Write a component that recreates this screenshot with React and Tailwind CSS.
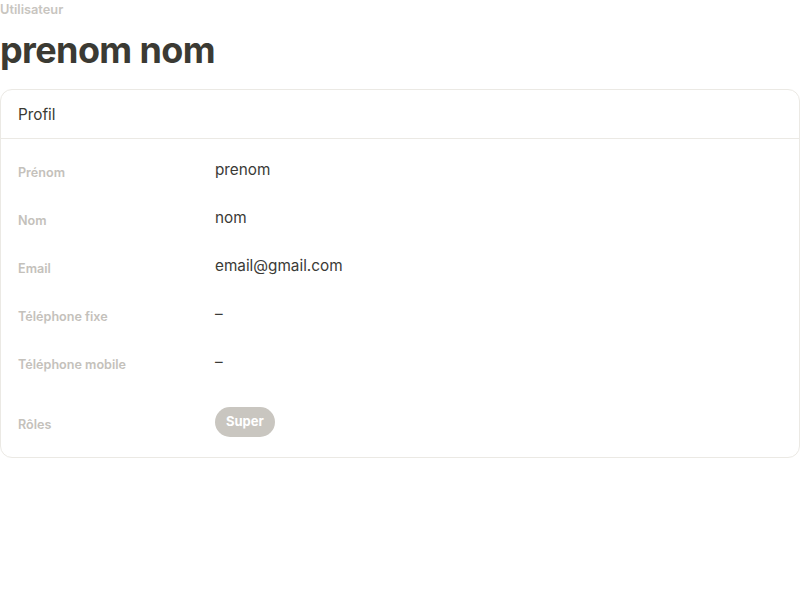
import React from 'react';

const rows = [
  { label: 'Prénom', value: 'prenom' },
  { label: 'Nom', value: 'nom' },
  { label: 'Email', value: 'email@gmail.com' },
  { label: 'Téléphone fixe', value: '–' },
  { label: 'Téléphone mobile', value: '–' },
];

const App = () => {
  return (
    <div className="min-h-screen bg-white" style={{ fontFamily: 'Inter, "Noto Sans", sans-serif' }}>
      <div className="pt-[2px] text-[12.8px] font-semibold leading-4 text-[#c8c5bf]">Utilisateur</div>
      <h1 className="mt-[12px] text-[36px] leading-[40px] font-bold tracking-[-0.017em] text-[#3b3a33]">prenom nom</h1>

      {/* Profile card */}
      <div className="mt-[19px] rounded-xl border border-[#ebe9e4] bg-white">
        <div className="h-[49px] flex items-center pt-[2px] px-[17px] border-b border-[#ebe9e4] text-[15.3px] text-[#3b3a33]">
          Profil
        </div>
        <div className="pt-[19px] pb-[20px] px-[17px]">
          {rows.map((row) => (
            <div key={row.label} className="flex h-[48px]">
              <div className="w-[197px] pt-[7px] text-[12.6px] font-semibold leading-4 text-[#c4c1bb]">{row.label}</div>
              <div className="text-[15.3px] leading-6 text-[#3a3a36]">{row.value}</div>
            </div>
          ))}
          <div className="flex items-center pt-[9px]">
            <div className="w-[197px] pt-[5px] text-[12.6px] font-semibold leading-4 text-[#c4c1bb]">Rôles</div>
            <span className="h-[30px] px-[11px] flex items-center rounded-full bg-[#c9c6c0] text-[13px] font-bold text-white">
              Super
            </span>
          </div>
        </div>
      </div>
    </div>
  );
};

export default App;
